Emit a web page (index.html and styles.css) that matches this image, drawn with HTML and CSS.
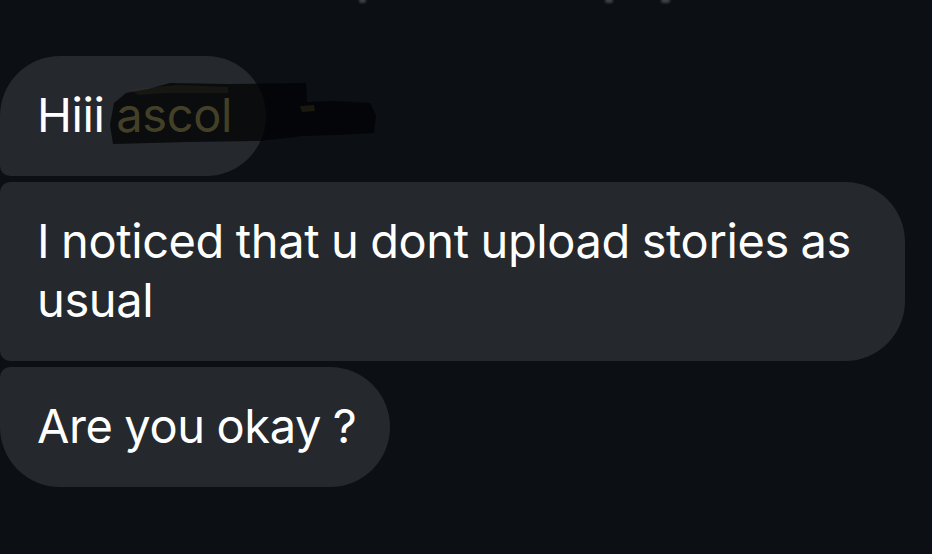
FILE: index.html
```html
<!DOCTYPE html>
<html lang="en">
<head>
<meta charset="utf-8">
<title>Chat</title>
<link rel="stylesheet" href="styles.css">
</head>
<body>
<div class="screen">
  <div class="cut-header" aria-hidden="true">
    <span class="mark mark-1"></span>
    <span class="mark mark-2"></span>
    <span class="mark mark-3"></span>
  </div>
  <div class="thread">
    <div class="bubble bubble-first">Hiii <span class="name"><svg class="scribble" width="272" height="66" viewBox="0 0 272 66" aria-hidden="true"><path d="M6 22 L18 12 L40 8 L62 2 L120 3 L198 2 L199 21 L225 20 L262 22 L268 34 L266 52 L230 54 L195 55 L152 60 L80 61 L5 63 L2 44 Z" fill="rgba(2,3,4,0.74)"/><path d="M22 8 L70 4 L120 6 L120 12 L60 12 L30 14 Z" fill="rgba(60,56,30,0.25)"/><path d="M192 25 L206 24 L207 30 L194 31 Z" fill="rgba(80,72,36,0.3)"/></svg><span class="name-text">ascol</span></span></div>
    <div class="bubble bubble-middle">I noticed that u dont upload stories as usual</div>
    <div class="bubble bubble-last">Are you okay ?</div>
  </div>
</div>
</body>
</html>
```

FILE: styles.css
```css
html, body {
  margin: 0;
  padding: 0;
  background: #0c0f14;
}

.screen {
  width: 932px;
  height: 554px;
  overflow: hidden;
  position: relative;
  background: #0c0f14;
  font-family: Inter, "Liberation Sans", Arial, sans-serif;
}

.cut-header {
  position: absolute;
  top: 0;
  left: 0;
  right: 0;
  height: 6px;
}

.mark {
  position: absolute;
  top: -2px;
  height: 5px;
  border-radius: 3px;
  background: #3d4047;
  filter: blur(1px);
}

.mark-1 { left: 359px; width: 7px; }
.mark-2 { left: 605px; width: 8px; }
.mark-3 { left: 661px; width: 9px; }

.thread {
  display: flex;
  flex-direction: column;
  align-items: flex-start;
  gap: 6px;
  padding-top: 56px;
  max-width: 905px;
}

.bubble {
  box-sizing: border-box;
  max-width: 905px;
  background: #25282d;
  color: #ffffff;
  font-size: 47px;
  font-weight: 400;
  line-height: 59px;
  letter-spacing: -0.4px;
  word-spacing: -1px;
  padding: 29px 34px 32px 37px;
  border-radius: 10px 60px 60px 10px;
}

.bubble-first {
  border-top-left-radius: 60px;
}

.bubble-middle {
  padding-right: 40px;
}

.bubble-last {
  border-bottom-left-radius: 60px;
}

.name {
  position: relative;
  display: inline-block;
}

.scribble {
  position: absolute;
  left: -8px;
  top: -4px;
}

.name-text {
  position: relative;
  color: #434027;
}
```
